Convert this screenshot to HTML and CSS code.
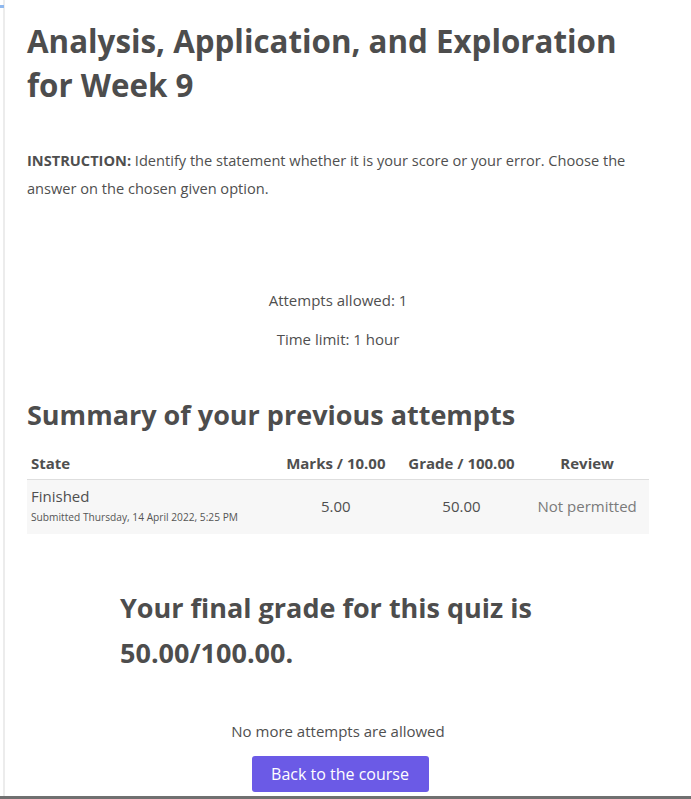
FILE: index.html
```html
<!DOCTYPE html>
<html lang="en">
<head>
<meta charset="utf-8">
<title>Quiz summary</title>
<link rel="stylesheet" href="styles.css">
</head>
<body>
<div class="frame">
  <span class="corner"></span>
  <main class="content">
    <h1 class="title">Analysis, Application, and Exploration for Week 9</h1>
    <p class="intro"><strong>INSTRUCTION:</strong> Identify the statement whether it is your score or your error. Choose the answer on the chosen given option.</p>
    <div class="info">
      <p>Attempts allowed: 1</p>
      <p>Time limit: 1 hour</p>
    </div>
    <h2 class="summary-title">Summary of your previous attempts</h2>
    <table class="attempts">
      <thead>
        <tr>
          <th class="c-state">State</th>
          <th class="c-num">Marks / 10.00</th>
          <th class="c-num c-grade">Grade / 100.00</th>
          <th class="c-num c-review">Review</th>
        </tr>
      </thead>
      <tbody>
        <tr>
          <td class="c-state">Finished<span class="submitted">Submitted Thursday, 14 April 2022, 5:25 PM</span></td>
          <td class="c-num">5.00</td>
          <td class="c-num">50.00</td>
          <td class="c-num muted">Not permitted</td>
        </tr>
      </tbody>
    </table>
    <div class="final">
      <h3>Your final grade for this quiz is 50.00/100.00.</h3>
    </div>
    <div class="actions">
      <p>No more attempts are allowed</p>
      <button class="btn" type="button">Back to the course</button>
    </div>
  </main>
</div>
<div class="bottom-bar"></div>
</body>
</html>
```
FILE: styles.css
```css
html, body {
  margin: 0;
  padding: 0;
  background: #fff;
}
body {
  font-family: "Open Sans", "Liberation Sans", sans-serif;
  color: #4f4f4f;
  font-size: 15px;
  overflow: hidden;
}
.frame {
  position: relative;
  height: 796px;
  margin-left: 3px;
  border-left: 2px solid #ececec;
  box-sizing: border-box;
}
.corner {
  position: absolute;
  left: -5px;
  top: 5px;
  width: 4px;
  height: 3px;
  background: #8fb8ee;
}
.content {
  width: 622px;
  padding-left: 22px;
  padding-top: 19px;
}
.title {
  margin: 0;
  font-size: 31.3px;
  line-height: 44px;
  font-weight: 700;
  color: #4d4d4d;
}
.intro {
  margin: 39px 0 0;
  line-height: 28px;
  font-size: 14.6px;
}
.intro strong {
  font-weight: 700;
}
.info {
  margin-top: 87px;
  text-align: center;
}
.info p {
  margin: 0 0 17px;
  line-height: 22px;
}
.summary-title {
  margin: 47px 0 0;
  font-size: 27px;
  line-height: 36px;
  font-weight: 700;
  color: #4d4d4d;
}
.attempts {
  width: 622px;
  margin-top: 14px;
  border-collapse: collapse;
}
.attempts th {
  font-weight: 700;
  font-size: 15px;
  line-height: 22px;
  padding: 5px 4px;
  border-bottom: 1px solid #dedede;
}
.attempts td {
  background: #f7f7f7;
  line-height: 22px;
  padding: 5px 4px 7px;
  vertical-align: middle;
}
.c-state {
  text-align: left;
  width: 240px;
}
.c-num {
  text-align: center;
  width: 116px;
}
.c-grade {
  width: 120px;
}
.c-review {
  width: 114px;
}
.submitted {
  display: block;
  font-size: 10.2px;
  line-height: 20px;
  color: #555;
}
.muted {
  color: #7a7a7a;
}
.final {
  width: 436px;
  margin: 51px auto 0;
}
.final h3 {
  margin: 0;
  font-size: 27px;
  line-height: 45px;
  font-weight: 700;
  color: #4d4d4d;
}
.actions {
  margin-top: 45px;
  text-align: center;
}
.actions p {
  margin: 0 0 14px;
  line-height: 22px;
}
.btn {
  font-family: inherit;
  font-size: 16px;
  color: #fff;
  background: #6b5ae6;
  border: 0;
  border-radius: 3px;
  width: 177px;
  height: 36px;
  padding: 0;
  margin-left: 4px;
  cursor: pointer;
}
.bottom-bar {
  height: 3px;
  background: #707070;
}
```
